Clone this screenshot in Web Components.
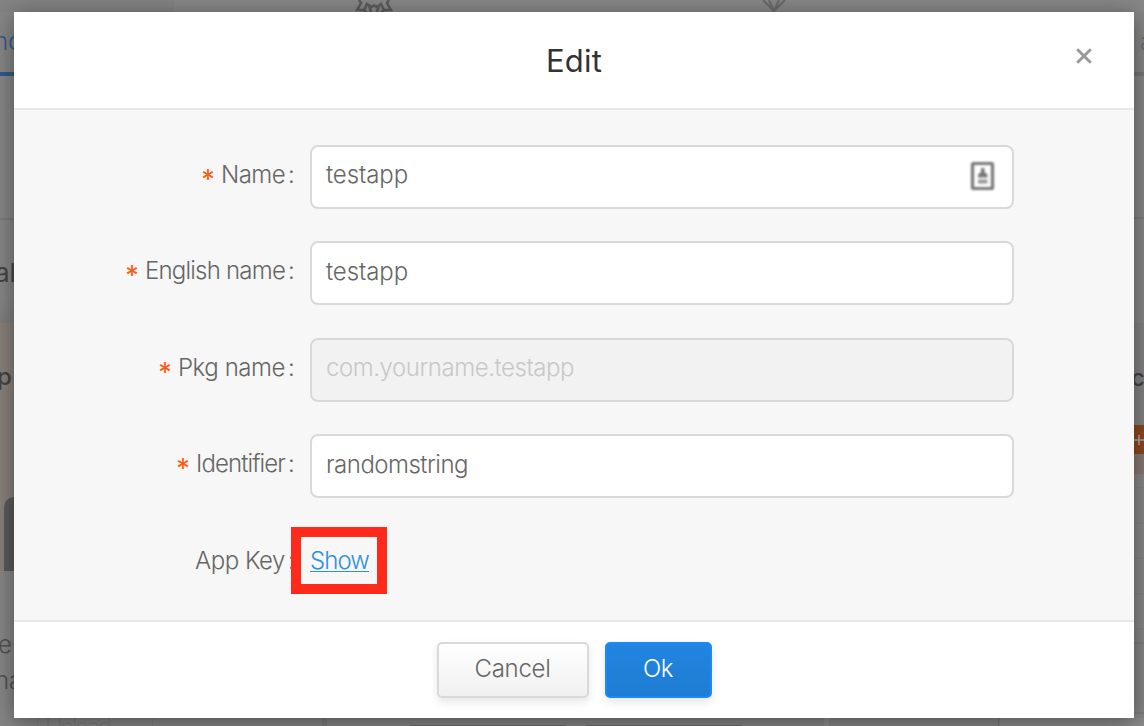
<!DOCTYPE html>
<html lang="en">
<head>
<meta charset="utf-8">
<title>Edit</title>
<style>
html,body{margin:0;height:100%;overflow:hidden;background:#858585}
body{font-family:Inter,"Liberation Sans",sans-serif;font-weight:300;font-size:24px;color:#666}
</style>
</head>
<body>
<app-shell></app-shell>
<script>
function define(name, html, ready){
  const t=document.createElement('template');
  t.innerHTML=html;
  customElements.define(name,class extends HTMLElement{
    connectedCallback(){
      if(this.shadowRoot)return;
      this.attachShadow({mode:'open'}).append(t.content.cloneNode(true));
      if(ready)ready.call(this,this.shadowRoot);
    }
  });
}
// Text run spaced to fill the width given in the "w" attribute.
define('fit-text',`<style>:host{display:inline-block;white-space:nowrap}</style><slot></slot>`,function(){
  const w=+this.getAttribute('w'),n=this.textContent.length;
  if(!w)return;
  const natural=this.getBoundingClientRect().width;
  this.style.letterSpacing=((w-natural)/n)+'px';
});
define('ui-field',`<style>
:host{display:grid;grid-template-columns:280px 704px;column-gap:16px;height:64px;align-items:stretch}
.label{display:flex;justify-content:flex-end;align-items:center;padding-bottom:4px;line-height:30px}
.star{width:12px;margin-right:7px;display:none;justify-content:center;color:#ff5a10;font-size:27px;font-weight:400;transform:translateY(5px)}
:host([required]) .star{display:flex}
.colon{width:5px;margin-left:4px;display:flex;justify-content:center}
.control{box-sizing:border-box;border:2px solid #d9d9d9;border-radius:8px;background:#fff;display:flex;align-items:center;justify-content:space-between;padding:0 15px 4px 14px}
:host([disabled]) .control{background:#f2f2f2;color:#c8c8c8}
:host([plain]) .control{border:0;background:none;padding:0 0 4px}
</style>
<div class="label"><span class="star">*</span><slot name="label"></slot><span class="colon">:</span></div>
<div class="control"><slot></slot></div>`);
define('contact-icon',`<style>:host{display:block;width:28px;height:32px;margin-top:3px}svg{display:block;filter:blur(.9px)}</style>
<svg width="28" height="32" viewBox="0 0 28 32"><rect x="3.500" y="3.500" width="20" height="25" rx="1" fill="#fff" stroke="#777" stroke-width="3.200"/><path d="M12 8h3.500v4l3 2.500v3h-9.500v-3l3-2.500z" fill="#777"/><path d="M9 19.500h9.500v4H9z" fill="#999"/></svg>`);
define('ui-button',`<style>
:host{display:flex;box-sizing:border-box;height:56px;width:152px;border:2px solid #d9d9d9;border-radius:5px;background:linear-gradient(#fff,#f0f0f0);box-shadow:0 4px 8px rgba(0,0,0,.1);align-items:center;justify-content:center;padding-bottom:3px}
:host([primary]){width:107px;border-color:#1a88ff;background:linear-gradient(#2185e0,#1f7cd2);color:#fff}
</style><slot></slot>`);
define('show-link',`<style>
:host{display:flex;position:relative;color:#2e8fe0;line-height:30px;margin-top:-3px}
:host::before{content:"";position:absolute;left:-19px;top:-19px;width:76px;height:47px;border:10px solid #ff2a1c}
span{border-bottom:1px solid #2e8fe0;height:25px;line-height:30px}
</style><span><slot></slot></span>`);
define('edit-dialog',`<style>
:host{display:flex;flex-direction:column;background:#fff;box-shadow:0 4px 22px rgba(0,0,0,.42);position:relative}
header{height:96px;border-bottom:2px solid #e8e8e8;display:grid;grid-template-columns:60px 1fr 60px;justify-items:center;color:#333}
h2{margin:0;font-size:31px;font-weight:400;line-height:38px;padding-top:30px}
.close{margin:36px 0 0 -41px;width:16px;height:16px}
main{box-sizing:border-box;background:#f7f7f7;height:510px;padding-top:34.9px;display:flex;flex-direction:column;gap:32.5px}
ui-field{flex:none}
footer{border-top:2px solid #e8e8e8;height:76px;padding-top:20px;display:flex;justify-content:center;gap:16px}
</style>
<header><span></span><h2><fit-text w="56">Edit</fit-text></h2><svg class="close" viewBox="0 0 16 16"><path d="M1.200 1.200l13.600 13.600M14.800 1.200L1.200 14.800" stroke="#999" stroke-width="2.900"/></svg></header>
<main>
<ui-field required><fit-text slot="label" w="64">Name</fit-text><fit-text w="82">testapp</fit-text><contact-icon></contact-icon></ui-field>
<ui-field required><fit-text slot="label" w="140">English name</fit-text><fit-text w="82">testapp</fit-text></ui-field>
<ui-field required disabled><fit-text slot="label" w="107">Pkg name</fit-text><fit-text w="248">com.yourname.testapp</fit-text></ui-field>
<ui-field required><fit-text slot="label" w="89">Identifier</fit-text><fit-text w="142">randomstring</fit-text></ui-field>
<ui-field plain><fit-text slot="label" w="90">App Key</fit-text><show-link><fit-text w="59">Show</fit-text></show-link></ui-field>
</main>
<footer><ui-button><fit-text w="76">Cancel</fit-text></ui-button><ui-button primary><fit-text w="30">Ok</fit-text></ui-button></footer>`);
// The dimmed page around the dialog: four narrow edges.
define('page-edge-top',`<style>:host{display:block;height:12px;background:linear-gradient(90deg,#838383 174px,#878787 174px)}svg{display:block}</style>
<svg width="1144" height="12" fill="none" stroke="#5b5b5b" stroke-width="2.500"><path d="M359 0l2 3-4 7 7 0 4 4M389 0l-2 3 4 7-7 0-4 4M364 10l3-6 4 3 3-1.500 3 1.500 4-3 3 6M369 5l2 7M379 5l-2 7"/><path d="M763 0l11 11 11-11M769 0l5 11 5-11" stroke="#6b6b6b" stroke-width="2.200"/></svg>`);
define('page-edge-left',`<style>
:host{display:flex;flex-direction:column;overflow:hidden;width:14px;color:#444}
div{box-sizing:border-box;flex:none;white-space:nowrap;overflow:hidden}
.tab{height:64px;border-bottom:4px solid #2d5c8a;color:#2d5c8a;line-height:59px}
.tab fit-text{margin-left:-6px}
.bar{height:144px;border-bottom:2px solid #7b7b7b}
.title{height:103px;line-height:106px;font-size:26px;font-weight:400;background:linear-gradient(#868686 75%,#7e7e7e)}
.title fit-text{margin-left:-5px}
.card{height:248px;background:#88807b;font-weight:500;line-height:108px}
.card fit-text{margin-left:-3px}
.avatar{height:76px;margin:66px 0 0 4px;border-radius:20px 0 0 0;background:#5a5a5a}
.copy{height:147px;line-height:36px;padding-top:56px;color:#505050}
.copy p{margin:0}
</style>
<div class="tab"><fit-text>nc</fit-text></div><div class="bar"></div><div class="title"><fit-text>al</fit-text></div><div class="card"><fit-text>p</fit-text><div class="avatar"></div></div>
<div class="copy"><p><fit-text style="margin-left:-2px">e</fit-text></p><p><fit-text style="margin-left:-5px">na</fit-text></p></div>`);
define('page-edge-right',`<style>
:host{display:flex;flex-direction:column;overflow:hidden;width:10px;color:#444}
div{box-sizing:border-box;flex:none;white-space:nowrap;overflow:hidden}
.tab{height:64px;border-bottom:4px solid #777;color:#6b6b6b;line-height:59px;padding-left:6px}
.bar{height:143px;border-bottom:2px solid #7b7b7b}
.title{height:104px}
.card{height:102px;background:#828282;font-weight:500;line-height:109px}
.add{height:29px;background:#8e4621;display:flex;align-items:center;justify-content:center}
.tint{height:20px;background:#877872}
.row{height:35.600px;border-bottom:2px solid #818181}
.last{height:70px;border-bottom:2px solid #7b7b7b}
</style>
<div class="tab">a</div><div class="bar"></div><div class="title"></div><div class="card"><fit-text style="margin-left:-3px">co</fit-text></div>
<div class="add"><svg width="10" height="10"><path d="M5 0v10M0 5h10" stroke="#aaa" stroke-width="1.500"/></svg></div><div class="tint"></div>
<div style="height:14px;border-bottom:1px solid #818181"></div><div class="row"></div><div class="row"></div><div class="row"></div><div class="row"></div><div style="height:14px;border-bottom:2px solid #7e7e7e"></div><div class="last"></div>`);
define('page-edge-bottom',`<style>:host{display:block;height:8px;background:linear-gradient(90deg,#858585 998px,#8b8b8b 998px)}svg{display:block}</style>
<svg width="1144" height="8"><path d="M37 0h1v8h-1zM152 0h1v8h-1z" fill="#7e7e7e"/><path d="M322 0h5v8h-5z" fill="#7d7d7d"/><path d="M824 0h5v8h-5z" fill="#8e8e8e"/><path d="M998 0h1.500v8h-1.500z" fill="#777"/><path d="M410 7h156v1H410zM586 7h156v1H586z" fill="#6a6a6a"/><text x="45" y="18" textLength="67" font-size="24" fill="#7c7c7c">Upload</text></svg>`);
define('app-shell',`<style>
:host{display:grid;width:1144px;height:726px;grid-template:12px 706px 8px/14px 1120px 10px;background:#868686;overflow:hidden}
page-edge-top,page-edge-bottom{grid-column:1/-1}
</style><page-edge-top></page-edge-top><page-edge-left></page-edge-left><edit-dialog></edit-dialog><page-edge-right></page-edge-right><page-edge-bottom></page-edge-bottom>`);
</script>
</body>
</html>
